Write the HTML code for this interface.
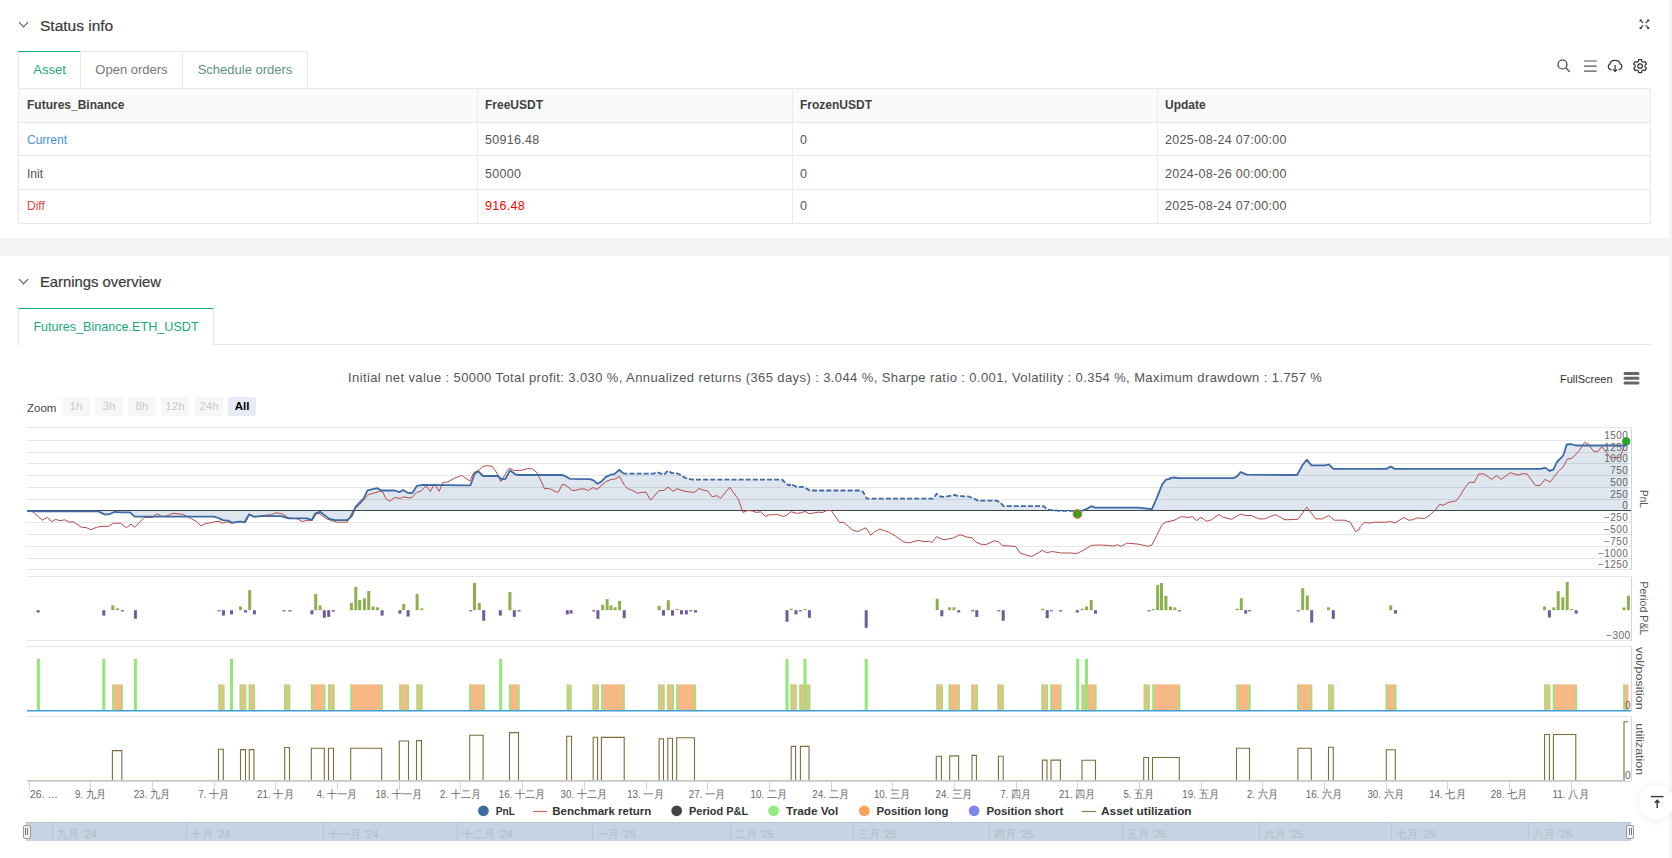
<!DOCTYPE html>
<html><head><meta charset="utf-8">
<style>
*{margin:0;padding:0;box-sizing:border-box}
html,body{width:1672px;height:858px;overflow:hidden;background:#f3f4f6;font-family:"Liberation Sans",sans-serif;color:#333}
.abs{position:absolute}
.panel{position:absolute;left:0;width:1669px;background:#fff}
.h{position:absolute;font-size:15.5px;color:#3a3a3a;white-space:nowrap;-webkit-text-stroke:0.2px #3a3a3a}
.chev{position:absolute;width:7px;height:7px;border-right:1.3px solid #555;border-bottom:1.3px solid #555;transform:rotate(45deg)}
.tab{position:absolute;top:51px;height:37px;border:1px solid #e8e8e8;border-bottom:none;font-size:13px;line-height:36px;text-align:center;white-space:nowrap;background:#fff}
.tbl{position:absolute;left:18px;top:88px;width:1633px;height:136px;border:1px solid #e8e8e8}
.row{position:absolute;left:0;width:1631px;border-top:1px solid #e8e8e8}
.cell{position:absolute;font-size:12.5px;white-space:nowrap;color:#555}
.vl{position:absolute;top:0;width:1px;height:134px;background:#ececec}
svg text{font-family:"Liberation Sans",sans-serif}
.ax{font-size:10px;fill:#666;letter-spacing:0.45px}
.xl{font-size:10.5px;fill:#666}
.lgt{font-size:11.5px;font-weight:bold;fill:#333}
.at{font-size:11.5px;fill:#555}
.zb{top:397px;width:28px;height:18.5px;background:#f7f7f7;border-radius:2px;font-size:11.5px;color:#c8c8c8;text-align:center;line-height:18.5px}
.lg{position:absolute;top:805px;font-size:11.5px;font-weight:bold;color:#333;white-space:nowrap;letter-spacing:0.2px}
.nl{position:absolute;top:827px;font-size:11px;color:#b3bcc7;white-space:nowrap}
</style></head><body>
<div class="panel" style="top:0;height:238px"></div>
<div class="chev" style="left:20px;top:19px"></div>
<div class="h" style="left:40px;top:17px">Status info</div>
<svg class="abs" style="left:1636px;top:16px" width="16" height="16" viewBox="0 0 16 16"><g stroke="#333" stroke-width="1.2" fill="none" stroke-linecap="round"><path d="M4.6 4.4 L6.8 6.6 M12.2 4.4 L10 6.6 M4.6 11.9 L6.8 9.7 M12.2 11.9 L10 9.7"/></g><g fill="#333"><path d="M3.6 3.4 L6.1 3.4 L3.6 5.9Z"/><path d="M13.2 3.4 L10.7 3.4 L13.2 5.9Z"/><path d="M3.6 12.9 L6.1 12.9 L3.6 10.4Z"/><path d="M13.2 12.9 L10.7 12.9 L13.2 10.4Z"/></g></svg>

<div class="tab" style="left:18px;width:63px;color:#1aa979;border-top:1.5px solid #1aad7f;line-height:36px">Asset</div>
<div class="tab" style="left:80px;width:103px;color:#777">Open orders</div>
<div class="tab" style="left:182px;width:126px;color:#5c9481">Schedule orders</div>

<svg class="abs" style="left:1550px;top:50px" width="110" height="35" viewBox="0 0 110 35">
 <g fill="none" stroke="#333" stroke-width="1.2">
  <circle cx="12.5" cy="14.5" r="4.5"/><path d="M15.8 17.8 L19.7 21.8"/>
  <path d="M34 11 H46.7 M34 16.1 H46.7 M34 21.2 H46.7" stroke="#555"/>
  <path d="M61.6 19.7 C58 19.7 57.3 15.2 59.9 14.2 C60.6 10.8 63.5 10.3 65.2 10.4 C68.4 10.5 69.8 12.4 70.2 14 C72.6 14.8 72.6 19.4 68.7 19.7"/>
  <path d="M65.1 15 V21.4 M63 19.3 L65.1 21.4 L67.2 19.3"/>
 </g>
 <g transform="translate(90.1,16.1)" fill="none" stroke="#333" stroke-width="1.2">
  <path d="M-1.76 -4.68 L-1.46 -6.54 L1.46 -6.54 L1.76 -4.68 L3.17 -3.87 L4.93 -4.54 L6.39 -2.00 L4.93 -0.81 L4.93 0.81 L6.39 2.00 L4.93 4.54 L3.17 3.87 L1.76 4.68 L1.46 6.54 L-1.46 6.54 L-1.76 4.68 L-3.17 3.87 L-4.93 4.54 L-6.39 2.00 L-4.93 0.81 L-4.93 -0.81 L-6.39 -2.00 L-4.93 -4.54 L-3.17 -3.87Z" stroke-linejoin="round"/>
  <circle r="2.3"/>
 </g>
</svg>

<div class="tbl">
 <div class="abs" style="left:0;top:0;width:1631px;height:33px;background:#fafafa"></div>
 <div class="row" style="top:33px"></div>
 <div class="row" style="top:66px"></div>
 <div class="row" style="top:100px"></div>
 <div class="vl" style="left:458px"></div>
 <div class="vl" style="left:773px"></div>
 <div class="vl" style="left:1138px"></div>
 <div class="cell" style="left:8px;top:9px;font-weight:bold;font-size:12px;color:#404040">Futures_Binance</div>
 <div class="cell" style="left:466px;top:9px;font-weight:bold;font-size:12px;color:#404040">FreeUSDT</div>
 <div class="cell" style="left:781px;top:9px;font-weight:bold;font-size:12px;color:#404040">FrozenUSDT</div>
 <div class="cell" style="left:1146px;top:9px;font-weight:bold;font-size:12px;color:#404040">Update</div>
 <div class="cell" style="left:8px;top:44px;color:#4a90e2;font-size:12px">Current</div>
 <div class="cell" style="left:466px;top:44px;letter-spacing:0.3px">50916.48</div>
 <div class="cell" style="left:781px;top:44px;letter-spacing:0.3px">0</div>
 <div class="cell" style="left:1146px;top:44px;letter-spacing:0.3px">2025-08-24 07:00:00</div>
 <div class="cell" style="left:8px;top:78px;font-size:12px">Init</div>
 <div class="cell" style="left:466px;top:78px;letter-spacing:0.3px">50000</div>
 <div class="cell" style="left:781px;top:78px;letter-spacing:0.3px">0</div>
 <div class="cell" style="left:1146px;top:78px;letter-spacing:0.3px">2024-08-26 00:00:00</div>
 <div class="cell" style="left:8px;top:110px;color:#d9463e;font-size:12px">Diff</div>
 <div class="cell" style="left:466px;top:110px;letter-spacing:0.3px;color:#ff0000">916.48</div>
 <div class="cell" style="left:781px;top:110px;letter-spacing:0.3px">0</div>
 <div class="cell" style="left:1146px;top:110px;letter-spacing:0.3px">2025-08-24 07:00:00</div>
</div>

<div class="panel" style="top:256px;height:602px"></div>
<div class="chev" style="left:20px;top:276px"></div>
<div class="h" style="left:40px;top:274px;font-size:14.8px">Earnings overview</div>
<div class="abs" style="left:18px;top:344px;width:1633px;height:1px;background:#e8e8e8"></div>
<div class="tab" style="left:18px;top:308px;width:196px;color:#1aa979;border-top:1.5px solid #1aad7f;line-height:36px;height:37px;font-size:12.6px">Futures_Binance.ETH_USDT</div>

<div class="abs" style="left:348px;top:370px;font-size:13px;letter-spacing:0.40px;color:#555;white-space:nowrap">Initial net value : 50000 Total profit: 3.030 %, Annualized returns (365 days) : 3.044 %, Sharpe ratio : 0.001, Volatility : 0.354 %, Maximum drawdown : 1.757 %</div>
<div class="abs" style="left:1560px;top:373px;font-size:11px;color:#333;white-space:nowrap">FullScreen</div>
<svg class="abs" style="left:1622px;top:370px" width="20" height="16"><g stroke="#666" stroke-width="3" stroke-linecap="round"><path d="M3 3.6 H16 M3 8.3 H16 M3 12.9 H16"/></g></svg>

<div class="abs" style="left:27px;top:401.5px;font-size:11.5px;color:#444">Zoom</div>
<div class="abs zb" style="left:62px">1h</div>
<div class="abs zb" style="left:95px">3h</div>
<div class="abs zb" style="left:128px">8h</div>
<div class="abs zb" style="left:161px">12h</div>
<div class="abs zb" style="left:195px">24h</div>
<div class="abs zb" style="left:228px;background:#e6ebf5;color:#000;font-weight:bold">All</div>

<svg class="abs" style="left:0;top:0" width="1672" height="858">
<line x1="27" x2="1631" y1="427.5" y2="427.5" stroke="#e6e6e6" stroke-width="1"/>
<line x1="27" x2="1631" y1="440.5" y2="440.5" stroke="#e6e6e6" stroke-width="1"/>
<line x1="27" x2="1631" y1="452.5" y2="452.5" stroke="#e6e6e6" stroke-width="1"/>
<line x1="27" x2="1631" y1="463.5" y2="463.5" stroke="#e6e6e6" stroke-width="1"/>
<line x1="27" x2="1631" y1="475.5" y2="475.5" stroke="#e6e6e6" stroke-width="1"/>
<line x1="27" x2="1631" y1="487.5" y2="487.5" stroke="#e6e6e6" stroke-width="1"/>
<line x1="27" x2="1631" y1="499.5" y2="499.5" stroke="#e6e6e6" stroke-width="1"/>
<line x1="27" x2="1631" y1="522.5" y2="522.5" stroke="#e6e6e6" stroke-width="1"/>
<line x1="27" x2="1631" y1="534.5" y2="534.5" stroke="#e6e6e6" stroke-width="1"/>
<line x1="27" x2="1631" y1="546.5" y2="546.5" stroke="#e6e6e6" stroke-width="1"/>
<line x1="27" x2="1631" y1="558.5" y2="558.5" stroke="#e6e6e6" stroke-width="1"/>
<line x1="27" x2="1631" y1="569.5" y2="569.5" stroke="#e6e6e6" stroke-width="1"/>
<path d="M27 510.9 L27.1 510.9 L36.8 511.4 L98.4 511.4 L104.9 514.6 L109.6 514.2 L114.2 512.0 L120.7 512.4 L130.1 512.4 L134.7 516.6 L214.0 516.6 L220.0 518.5 L219.9 518.9 L223.1 520.2 L227.7 520.7 L232.4 522.6 L239.9 521.7 L244.5 522.2 L249.2 514.2 L253.8 516.6 L262.2 516.1 L280.9 516.1 L288.4 518.3 L307.0 518.3 L311.7 520.2 L315.4 513.3 L320.1 511.8 L329.4 518.9 L335.0 520.2 L347.1 520.2 L351.8 516.1 L355.5 506.8 L363.9 498.0 L367.6 490.3 L377.0 488.1 L381.6 490.5 L394.7 490.5 L399.4 492.2 L403.1 490.0 L407.8 492.8 L410.0 493.1 L409.9 492.8 L412.7 492.8 L416.8 485.9 L422.4 484.9 L469.0 485.3 L470.5 485.3 L474.6 473.7 L478.4 471.3 L483.0 476.0 L497.9 476.0 L501.7 479.3 L505.4 478.8 L510.1 470.4 L515.7 474.5 L519.4 475.0 L561.4 475.0 L564.2 475.6 L569.8 478.8 L590.3 479.1 L594.0 480.6 L597.4 483.8 L600.0 482.5 L599.9 482.5 L601.2 481.6 L605.9 476.9 L610.5 474.7 L614.3 474.1 L619.5 469.8 L622.6 472.8 L622.6 472.8 L624.5 473.7 L653.4 473.7 L657.2 472.2 L663.7 474.7 L668.0 470.7 L672.1 473.2 L676.8 473.2 L681.4 475.4 L685.1 477.8 L692.6 479.7 L782.2 479.7 L785.0 482.5 L787.8 484.9 L790.0 485.3 L789.9 484.4 L791.2 484.4 L797.7 487.2 L803.3 486.8 L809.9 490.5 L860.2 490.5 L863.0 491.8 L866.8 498.7 L933.0 498.7 L936.7 493.7 L940.4 496.5 L944.2 496.9 L954.4 495.0 L959.1 496.1 L968.4 496.5 L974.0 498.4 L977.8 500.6 L980.0 500.6 L979.9 500.6 L996.1 500.6 L999.9 502.1 L1003.6 506.2 L1043.7 506.2 L1047.4 509.6 L1051.2 510.1 L1059.6 510.9 L1081.9 510.9 L1081.9 510.9 L1087.5 508.6 L1091.3 506.2 L1095.0 507.7 L1137.9 507.7 L1151.9 509.2 L1156.6 498.4 L1162.2 484.4 L1165.9 479.7 L1170.0 478.8 L1169.9 478.2 L1174.0 477.5 L1178.7 478.2 L1232.8 478.2 L1236.5 476.9 L1240.6 472.2 L1246.8 474.7 L1297.1 475.0 L1302.7 464.8 L1306.8 459.7 L1311.5 465.3 L1325.1 465.3 L1328.8 464.4 L1333.5 468.9 L1360.0 468.9 L1359.9 468.9 L1386.4 468.9 L1390.7 466.6 L1394.8 468.9 L1541.2 468.9 L1545.0 467.6 L1550.0 471.3 L1549.9 470.6 L1553.4 469.7 L1556.9 462.0 L1563.2 455.7 L1566.7 444.5 L1570.9 444.1 L1575.8 445.5 L1625.5 445.5 L1628.3 441.0 L1628.3 510.9 Z" fill="#3e6aa5" fill-opacity="0.17" stroke="none"/>
<line x1="27" x2="1631" y1="510.5" y2="510.5" stroke="#3c4450" stroke-width="1.2"/>
<path d="M27.1 510.9 L33.1 512.0 L38.7 517.0 L42.4 520.2 L47.1 517.4 L51.7 521.7 L55.4 519.4 L60.1 520.7 L64.8 519.8 L69.4 522.2 L73.2 521.7 L81.6 527.3 L86.2 527.6 L90.9 529.7 L96.5 527.3 L102.1 526.3 L108.6 526.3 L113.3 523.2 L120.7 523.2 L126.3 527.8 L131.0 524.1 L134.7 527.3 L144.1 517.6 L152.5 517.4 L157.1 513.8 L161.8 516.5 L166.5 516.1 L173.0 513.3 L181.4 514.2 L184.2 514.8 L188.8 517.4 L196.3 521.3 L201.0 526.0 L205.6 523.2 L210.3 523.0 L215.0 521.7 L220.0 521.3 L219.9 522.6 L223.1 523.0 L227.7 521.7 L231.5 523.2 L240.8 521.3 L245.4 522.6 L249.2 515.1 L254.8 517.0 L266.0 515.1 L271.6 514.6 L276.2 512.7 L281.8 513.8 L288.4 517.9 L297.7 518.9 L302.4 521.7 L307.0 520.2 L311.7 520.7 L316.3 514.2 L319.1 513.3 L326.6 518.9 L336.9 522.2 L347.1 522.2 L353.7 509.6 L359.3 504.9 L368.6 494.6 L379.8 491.3 L382.6 491.8 L386.3 499.3 L390.0 501.2 L394.7 497.4 L400.3 498.4 L404.0 496.9 L410.0 498.0 L409.9 498.0 L412.1 497.1 L416.8 492.4 L421.5 490.9 L426.1 485.7 L430.4 491.5 L434.5 483.8 L439.2 491.3 L442.9 482.5 L447.6 481.9 L454.1 478.4 L461.6 475.4 L470.0 481.2 L473.7 472.6 L478.4 470.4 L483.0 466.3 L487.7 465.7 L492.4 466.6 L497.0 473.2 L500.7 481.6 L505.4 474.1 L509.1 468.1 L513.8 470.4 L521.3 470.4 L527.8 468.5 L532.5 468.9 L537.1 472.8 L544.6 488.7 L549.3 488.5 L556.7 492.2 L558.6 491.8 L562.3 484.4 L566.0 485.3 L571.6 490.0 L575.4 490.5 L580.0 489.0 L584.7 489.0 L588.4 490.5 L593.1 487.5 L596.8 489.4 L600.0 487.2 L599.9 486.8 L605.9 481.6 L610.5 479.7 L615.2 479.0 L619.5 476.3 L624.5 485.3 L628.2 489.0 L632.9 490.5 L637.6 493.3 L641.3 492.4 L646.0 492.2 L650.6 500.2 L659.0 490.5 L663.7 490.5 L668.0 487.2 L673.0 491.3 L676.8 488.7 L683.3 490.9 L687.9 491.8 L694.5 492.4 L699.1 488.5 L703.8 490.3 L707.5 490.9 L712.2 496.9 L716.9 495.6 L720.6 498.4 L729.6 487.2 L738.3 499.3 L743.0 512.4 L747.6 510.5 L752.3 510.9 L756.0 512.4 L760.7 511.8 L765.4 516.5 L769.1 514.8 L778.4 514.6 L783.1 516.5 L786.8 515.1 L790.0 512.4 L789.9 512.4 L791.2 511.8 L796.8 513.3 L800.5 512.9 L805.2 511.4 L808.9 513.7 L818.2 512.2 L822.9 512.4 L826.6 510.5 L831.3 510.5 L839.7 522.6 L843.4 522.2 L852.8 530.1 L857.4 531.6 L865.8 527.8 L870.9 535.1 L875.1 531.4 L879.8 529.1 L888.2 531.9 L895.7 536.2 L904.1 542.2 L909.7 542.8 L918.1 540.3 L923.7 541.6 L929.3 541.3 L932.1 542.6 L936.7 536.6 L942.3 539.4 L946.0 539.4 L953.5 537.9 L960.0 534.7 L966.6 537.0 L972.2 537.9 L975.9 542.2 L980.0 543.5 L979.9 544.1 L985.9 544.6 L994.3 540.9 L998.0 541.6 L1002.6 545.6 L1015.7 546.5 L1020.4 553.4 L1031.6 556.6 L1042.8 550.2 L1046.5 552.8 L1052.1 551.5 L1061.4 553.0 L1068.9 553.0 L1077.3 553.4 L1083.8 550.0 L1091.3 545.4 L1098.7 545.0 L1108.1 545.4 L1113.7 546.3 L1117.4 544.6 L1121.1 546.5 L1126.7 543.1 L1137.9 544.1 L1148.2 546.3 L1151.9 545.0 L1156.6 535.7 L1162.2 524.5 L1165.9 522.1 L1170.0 521.3 L1169.9 521.1 L1174.0 520.4 L1181.5 516.6 L1188.0 517.4 L1192.6 516.6 L1196.4 520.7 L1201.0 517.4 L1206.6 521.3 L1211.3 519.8 L1218.8 514.6 L1223.4 517.4 L1231.8 519.3 L1240.2 514.2 L1245.8 515.5 L1251.4 515.5 L1258.9 518.9 L1264.5 518.9 L1270.1 516.6 L1275.7 514.6 L1285.0 519.8 L1298.1 519.3 L1306.8 507.1 L1315.8 518.9 L1322.3 518.9 L1328.8 515.5 L1334.4 520.2 L1344.7 520.2 L1350.3 522.2 L1355.5 531.6 L1360.0 528.8 L1359.9 526.9 L1364.6 522.2 L1368.7 523.2 L1374.3 522.2 L1386.4 522.2 L1390.1 521.3 L1394.8 523.0 L1404.1 517.4 L1408.8 520.2 L1412.5 519.8 L1417.2 517.9 L1424.6 518.5 L1430.2 514.8 L1434.9 510.5 L1439.6 504.3 L1443.3 505.3 L1447.9 502.5 L1456.3 500.8 L1460.1 495.6 L1464.7 488.1 L1469.4 482.1 L1474.1 482.5 L1478.7 474.1 L1483.4 473.7 L1491.8 479.3 L1496.5 475.6 L1501.1 479.3 L1510.4 472.8 L1517.9 475.0 L1523.5 473.5 L1527.2 474.1 L1535.6 485.7 L1540.3 485.3 L1545.0 479.3 L1550.0 482.1 L1553.4 477.8 L1558.3 471.3 L1563.2 466.9 L1567.4 458.9 L1571.6 458.5 L1578.6 451.5 L1584.6 442.4 L1588.4 444.1 L1593.3 451.0 L1597.5 451.9 L1601.7 446.6 L1610.8 457.8 L1619.9 457.5 L1624.1 446.6 L1628.3 439.6" fill="none" stroke="#b54a48" stroke-width="1" stroke-linejoin="round"/>
<path d="M27.1 510.9 L36.8 511.4 L98.4 511.4 L104.9 514.6 L109.6 514.2 L114.2 512.0 L120.7 512.4 L130.1 512.4 L134.7 516.6 L214.0 516.6 L220.0 518.5 L219.9 518.9 L223.1 520.2 L227.7 520.7 L232.4 522.6 L239.9 521.7 L244.5 522.2 L249.2 514.2 L253.8 516.6 L262.2 516.1 L280.9 516.1 L288.4 518.3 L307.0 518.3 L311.7 520.2 L315.4 513.3 L320.1 511.8 L329.4 518.9 L335.0 520.2 L347.1 520.2 L351.8 516.1 L355.5 506.8 L363.9 498.0 L367.6 490.3 L377.0 488.1 L381.6 490.5 L394.7 490.5 L399.4 492.2 L403.1 490.0 L407.8 492.8 L410.0 493.1 L409.9 492.8 L412.7 492.8 L416.8 485.9 L422.4 484.9 L469.0 485.3 L470.5 485.3 L474.6 473.7 L478.4 471.3 L483.0 476.0 L497.9 476.0 L501.7 479.3 L505.4 478.8 L510.1 470.4 L515.7 474.5 L519.4 475.0 L561.4 475.0 L564.2 475.6 L569.8 478.8 L590.3 479.1 L594.0 480.6 L597.4 483.8 L600.0 482.5 L599.9 482.5 L601.2 481.6 L605.9 476.9 L610.5 474.7 L614.3 474.1 L619.5 469.8 L622.6 472.8" fill="none" stroke="#3e6aa5" stroke-width="1.8" stroke-linejoin="round"/>
<path d="M622.6 472.8 L624.5 473.7 L653.4 473.7 L657.2 472.2 L663.7 474.7 L668.0 470.7 L672.1 473.2 L676.8 473.2 L681.4 475.4 L685.1 477.8 L692.6 479.7 L782.2 479.7 L785.0 482.5 L787.8 484.9 L790.0 485.3 L789.9 484.4 L791.2 484.4 L797.7 487.2 L803.3 486.8 L809.9 490.5 L860.2 490.5 L863.0 491.8 L866.8 498.7 L933.0 498.7 L936.7 493.7 L940.4 496.5 L944.2 496.9 L954.4 495.0 L959.1 496.1 L968.4 496.5 L974.0 498.4 L977.8 500.6 L980.0 500.6 L979.9 500.6 L996.1 500.6 L999.9 502.1 L1003.6 506.2 L1043.7 506.2 L1047.4 509.6 L1051.2 510.1 L1059.6 510.9 L1081.9 510.9" fill="none" stroke="#3e6aa5" stroke-width="1.8" stroke-dasharray="5,2.1" stroke-linejoin="round"/>
<path d="M1081.9 510.9 L1087.5 508.6 L1091.3 506.2 L1095.0 507.7 L1137.9 507.7 L1151.9 509.2 L1156.6 498.4 L1162.2 484.4 L1165.9 479.7 L1170.0 478.8 L1169.9 478.2 L1174.0 477.5 L1178.7 478.2 L1232.8 478.2 L1236.5 476.9 L1240.6 472.2 L1246.8 474.7 L1297.1 475.0 L1302.7 464.8 L1306.8 459.7 L1311.5 465.3 L1325.1 465.3 L1328.8 464.4 L1333.5 468.9 L1360.0 468.9 L1359.9 468.9 L1386.4 468.9 L1390.7 466.6 L1394.8 468.9 L1541.2 468.9 L1545.0 467.6 L1550.0 471.3 L1549.9 470.6 L1553.4 469.7 L1556.9 462.0 L1563.2 455.7 L1566.7 444.5 L1570.9 444.1 L1575.8 445.5 L1625.5 445.5 L1628.3 441.0" fill="none" stroke="#3e6aa5" stroke-width="1.8" stroke-linejoin="round"/>
<circle cx="1077.5" cy="514" r="4.4" fill="#0fb30f" stroke="#ff5a5a" stroke-width="1"/>
<path d="M1077.7 511.5 V518.5" stroke="#e0604a" stroke-width="1"/><circle cx="1078.2" cy="512.3" r="0.9" fill="#ff5050"/>
<circle cx="1626.2" cy="441.3" r="3.8" fill="#19b319" stroke="#2a9a2a" stroke-width="0.8"/>
<line x1="1631.5" x2="1631.5" y1="428" y2="570" stroke="#ccd6eb" stroke-width="1"/>
<line x1="1631.5" x2="1631.5" y1="576.5" y2="641" stroke="#ccd6eb" stroke-width="1"/>
<line x1="1631.5" x2="1631.5" y1="646.5" y2="711" stroke="#ccd6eb" stroke-width="1"/>
<line x1="1631.5" x2="1631.5" y1="716.5" y2="780.5" stroke="#ccd6eb" stroke-width="1"/>
<text x="1628.3" y="439.0" text-anchor="end" class="ax">1500</text>
<text x="1628.3" y="451.0" text-anchor="end" class="ax">1250</text>
<text x="1628.3" y="462.0" text-anchor="end" class="ax">1000</text>
<text x="1628.3" y="474.0" text-anchor="end" class="ax">750</text>
<text x="1628.3" y="486.0" text-anchor="end" class="ax">500</text>
<text x="1628.3" y="498.0" text-anchor="end" class="ax">250</text>
<text x="1628.3" y="509.0" text-anchor="end" class="ax">0</text>
<text x="1628.3" y="521.0" text-anchor="end" class="ax">−250</text>
<text x="1628.3" y="533.0" text-anchor="end" class="ax">−500</text>
<text x="1628.3" y="545.0" text-anchor="end" class="ax">−750</text>
<text x="1628.3" y="557.0" text-anchor="end" class="ax">−1000</text>
<text x="1628.3" y="568.0" text-anchor="end" class="ax">−1250</text>
<line x1="27" x2="1631" y1="576.5" y2="576.5" stroke="#e6e6e6" stroke-width="1"/>
<line x1="27" x2="1631" y1="640.5" y2="640.5" stroke="#e6e6e6" stroke-width="1"/>
<rect x="36.7" y="610.2" width="3" height="2.3" fill="#6f5a9a"/>
<rect x="102.3" y="610.2" width="3" height="5.4" fill="#6f5a9a"/>
<rect x="111.3" y="605.4" width="3" height="4.8" fill="#8db04f"/>
<rect x="116.1" y="608.3" width="3" height="1.9" fill="#8db04f"/>
<rect x="120.9" y="610.2" width="3" height="1.2" fill="#6f5a9a"/>
<rect x="133.9" y="610.2" width="3" height="8.6" fill="#6f5a9a"/>
<rect x="217.5" y="610.2" width="3" height="1.2" fill="#6f5a9a"/>
<rect x="221.9" y="610.2" width="3" height="5.4" fill="#6f5a9a"/>
<rect x="230.0" y="610.2" width="3" height="4.2" fill="#6f5a9a"/>
<rect x="239.0" y="606.4" width="3" height="3.8" fill="#8db04f"/>
<rect x="244.0" y="610.2" width="3" height="2.3" fill="#6f5a9a"/>
<rect x="248.2" y="590.1" width="3" height="20.1" fill="#8db04f"/>
<rect x="252.9" y="610.2" width="3" height="4.2" fill="#6f5a9a"/>
<rect x="282.6" y="610.2" width="3" height="1.2" fill="#6f5a9a"/>
<rect x="288.4" y="610.2" width="3" height="1.3" fill="#6f5a9a"/>
<rect x="310.4" y="610.2" width="3" height="4.2" fill="#6f5a9a"/>
<rect x="314.2" y="593.9" width="3" height="16.3" fill="#8db04f"/>
<rect x="318.6" y="605.4" width="3" height="4.8" fill="#8db04f"/>
<rect x="322.8" y="610.2" width="3" height="7.6" fill="#6f5a9a"/>
<rect x="327.2" y="610.2" width="3" height="6.7" fill="#6f5a9a"/>
<rect x="331.8" y="610.2" width="3" height="1.5" fill="#6f5a9a"/>
<rect x="349.9" y="602.9" width="3" height="7.3" fill="#8db04f"/>
<rect x="354.3" y="586.8" width="3" height="23.4" fill="#8db04f"/>
<rect x="358.2" y="600.0" width="3" height="10.2" fill="#8db04f"/>
<rect x="362.9" y="598.3" width="3" height="11.9" fill="#8db04f"/>
<rect x="367.2" y="591.1" width="3" height="19.1" fill="#8db04f"/>
<rect x="371.6" y="606.4" width="3" height="3.8" fill="#8db04f"/>
<rect x="376.0" y="607.3" width="3" height="2.9" fill="#8db04f"/>
<rect x="380.6" y="610.2" width="3" height="5.4" fill="#6f5a9a"/>
<rect x="398.4" y="610.2" width="3" height="3.4" fill="#6f5a9a"/>
<rect x="402.2" y="603.9" width="3" height="6.3" fill="#8db04f"/>
<rect x="406.6" y="610.2" width="3" height="6.3" fill="#6f5a9a"/>
<rect x="415.6" y="593.9" width="3" height="16.3" fill="#8db04f"/>
<rect x="420.4" y="608.3" width="3" height="1.9" fill="#8db04f"/>
<rect x="469.2" y="610.2" width="3" height="1.2" fill="#6f5a9a"/>
<rect x="473.0" y="583.0" width="3" height="27.2" fill="#8db04f"/>
<rect x="477.8" y="602.9" width="3" height="7.3" fill="#8db04f"/>
<rect x="482.2" y="610.2" width="3" height="10.5" fill="#6f5a9a"/>
<rect x="498.8" y="610.2" width="3" height="5.4" fill="#6f5a9a"/>
<rect x="508.4" y="592.0" width="3" height="18.2" fill="#8db04f"/>
<rect x="512.8" y="610.2" width="3" height="6.7" fill="#6f5a9a"/>
<rect x="517.6" y="610.2" width="3" height="1.3" fill="#6f5a9a"/>
<rect x="565.8" y="610.2" width="3" height="4.2" fill="#6f5a9a"/>
<rect x="569.6" y="610.2" width="3" height="3.4" fill="#6f5a9a"/>
<rect x="592.2" y="610.2" width="3" height="1.2" fill="#6f5a9a"/>
<rect x="596.4" y="610.2" width="3" height="8.6" fill="#6f5a9a"/>
<rect x="601.2" y="604.8" width="3" height="5.4" fill="#8db04f"/>
<rect x="605.6" y="599.1" width="3" height="11.1" fill="#8db04f"/>
<rect x="609.5" y="605.4" width="3" height="4.8" fill="#8db04f"/>
<rect x="613.7" y="607.3" width="3" height="2.9" fill="#8db04f"/>
<rect x="618.1" y="601.0" width="3" height="9.2" fill="#8db04f"/>
<rect x="622.7" y="610.2" width="3" height="8.0" fill="#6f5a9a"/>
<rect x="657.6" y="605.8" width="3" height="4.4" fill="#8db04f"/>
<rect x="662.0" y="610.2" width="3" height="5.4" fill="#6f5a9a"/>
<rect x="666.8" y="600.2" width="3" height="10.0" fill="#8db04f"/>
<rect x="671.0" y="610.2" width="3" height="5.4" fill="#6f5a9a"/>
<rect x="675.8" y="609.0" width="3" height="1.2" fill="#8db04f"/>
<rect x="680.0" y="610.2" width="3" height="4.2" fill="#6f5a9a"/>
<rect x="684.8" y="610.2" width="3" height="4.2" fill="#6f5a9a"/>
<rect x="689.2" y="610.2" width="3" height="1.2" fill="#6f5a9a"/>
<rect x="694.0" y="610.2" width="3" height="2.3" fill="#6f5a9a"/>
<rect x="785.5" y="610.2" width="3" height="11.5" fill="#6f5a9a"/>
<rect x="789.7" y="608.7" width="3" height="1.5" fill="#8db04f"/>
<rect x="794.5" y="610.2" width="3" height="4.2" fill="#6f5a9a"/>
<rect x="798.9" y="610.2" width="3" height="1.2" fill="#6f5a9a"/>
<rect x="803.5" y="608.9" width="3" height="1.3" fill="#8db04f"/>
<rect x="807.9" y="610.2" width="3" height="7.6" fill="#6f5a9a"/>
<rect x="864.7" y="610.2" width="3" height="17.6" fill="#6f5a9a"/>
<rect x="935.7" y="598.7" width="3" height="11.5" fill="#8db04f"/>
<rect x="940.3" y="610.2" width="3" height="6.1" fill="#6f5a9a"/>
<rect x="948.0" y="607.3" width="3" height="2.9" fill="#8db04f"/>
<rect x="952.4" y="607.3" width="3" height="2.9" fill="#8db04f"/>
<rect x="957.2" y="610.2" width="3" height="2.3" fill="#6f5a9a"/>
<rect x="971.1" y="610.2" width="3" height="1.2" fill="#6f5a9a"/>
<rect x="975.3" y="610.2" width="3" height="6.7" fill="#6f5a9a"/>
<rect x="997.3" y="610.2" width="3" height="1.2" fill="#6f5a9a"/>
<rect x="1001.7" y="610.2" width="3" height="10.5" fill="#6f5a9a"/>
<rect x="1041.3" y="608.7" width="3" height="1.5" fill="#8db04f"/>
<rect x="1045.7" y="610.2" width="3" height="8.0" fill="#6f5a9a"/>
<rect x="1049.9" y="610.2" width="3" height="1.2" fill="#6f5a9a"/>
<rect x="1059.1" y="610.2" width="3" height="1.2" fill="#6f5a9a"/>
<rect x="1075.8" y="610.2" width="3" height="2.3" fill="#6f5a9a"/>
<rect x="1080.6" y="608.7" width="3" height="1.5" fill="#8db04f"/>
<rect x="1085.0" y="606.4" width="3" height="3.8" fill="#8db04f"/>
<rect x="1089.7" y="600.0" width="3" height="10.2" fill="#8db04f"/>
<rect x="1094.0" y="610.2" width="3" height="3.4" fill="#6f5a9a"/>
<rect x="1147.5" y="610.2" width="3" height="1.2" fill="#6f5a9a"/>
<rect x="1151.8" y="609.0" width="3" height="1.2" fill="#8db04f"/>
<rect x="1156.2" y="584.9" width="3" height="25.3" fill="#8db04f"/>
<rect x="1160.0" y="583.0" width="3" height="27.2" fill="#8db04f"/>
<rect x="1164.4" y="595.8" width="3" height="14.4" fill="#8db04f"/>
<rect x="1169.0" y="606.4" width="3" height="3.8" fill="#8db04f"/>
<rect x="1173.4" y="607.3" width="3" height="2.9" fill="#8db04f"/>
<rect x="1177.8" y="610.2" width="3" height="1.2" fill="#6f5a9a"/>
<rect x="1235.6" y="608.7" width="3" height="1.5" fill="#8db04f"/>
<rect x="1239.8" y="598.3" width="3" height="11.9" fill="#8db04f"/>
<rect x="1244.2" y="610.2" width="3" height="3.4" fill="#6f5a9a"/>
<rect x="1248.0" y="610.2" width="3" height="1.2" fill="#6f5a9a"/>
<rect x="1296.8" y="610.2" width="3" height="1.2" fill="#6f5a9a"/>
<rect x="1301.2" y="588.2" width="3" height="22.0" fill="#8db04f"/>
<rect x="1305.8" y="595.5" width="3" height="14.7" fill="#8db04f"/>
<rect x="1310.2" y="610.2" width="3" height="12.4" fill="#6f5a9a"/>
<rect x="1327.0" y="607.3" width="3" height="2.9" fill="#8db04f"/>
<rect x="1331.8" y="610.2" width="3" height="8.6" fill="#6f5a9a"/>
<rect x="1389.2" y="605.4" width="3" height="4.8" fill="#8db04f"/>
<rect x="1394.0" y="610.2" width="3" height="3.4" fill="#6f5a9a"/>
<rect x="1543.1" y="606.4" width="3" height="3.8" fill="#8db04f"/>
<rect x="1547.9" y="610.2" width="3" height="7.3" fill="#6f5a9a"/>
<rect x="1552.3" y="607.3" width="3" height="2.9" fill="#8db04f"/>
<rect x="1556.7" y="591.1" width="3" height="19.1" fill="#8db04f"/>
<rect x="1561.3" y="597.4" width="3" height="12.8" fill="#8db04f"/>
<rect x="1565.7" y="582.1" width="3" height="28.1" fill="#8db04f"/>
<rect x="1570.1" y="609.0" width="3" height="1.2" fill="#8db04f"/>
<rect x="1574.7" y="610.2" width="3" height="3.4" fill="#6f5a9a"/>
<rect x="1622.5" y="607.5" width="3" height="2.7" fill="#8db04f"/>
<rect x="1626.9" y="595.7" width="3" height="14.5" fill="#8db04f"/>
<text x="1630.5" y="638.5" text-anchor="end" class="ax">−300</text>
<line x1="27" x2="1631" y1="646.5" y2="646.5" stroke="#e6e6e6" stroke-width="1"/>
<line x1="27" x2="1631" y1="716.5" y2="716.5" stroke="#e6e6e6" stroke-width="1"/>
<rect x="112.4" y="684.4" width="10.4" height="26.1" fill="#f6b986"/>
<rect x="112.4" y="684.4" width="1.5" height="26.1" fill="#8ee87a"/>
<rect x="121.3" y="685.1999999999999" width="1.5" height="25.3" fill="#8ee87a"/>
<rect x="218.5" y="684.4" width="5.9" height="26.1" fill="#f6b986"/>
<rect x="218.5" y="684.4" width="1.5" height="26.1" fill="#8ee87a"/>
<rect x="222.9" y="685.1999999999999" width="1.5" height="25.3" fill="#8ee87a"/>
<rect x="239.7" y="684.4" width="6.5" height="26.1" fill="#f6b986"/>
<rect x="239.7" y="684.4" width="1.5" height="26.1" fill="#8ee87a"/>
<rect x="244.7" y="685.1999999999999" width="1.5" height="25.3" fill="#8ee87a"/>
<rect x="248.7" y="684.4" width="6.3" height="26.1" fill="#f6b986"/>
<rect x="248.7" y="684.4" width="1.5" height="26.1" fill="#8ee87a"/>
<rect x="253.5" y="685.1999999999999" width="1.5" height="25.3" fill="#8ee87a"/>
<rect x="284.1" y="684.4" width="6.1" height="26.1" fill="#f6b986"/>
<rect x="284.1" y="684.4" width="1.5" height="26.1" fill="#8ee87a"/>
<rect x="288.7" y="685.1999999999999" width="1.5" height="25.3" fill="#8ee87a"/>
<rect x="310.9" y="684.4" width="14.4" height="26.1" fill="#f6b986"/>
<rect x="310.9" y="684.4" width="1.5" height="26.1" fill="#8ee87a"/>
<rect x="323.8" y="685.1999999999999" width="1.5" height="25.3" fill="#8ee87a"/>
<rect x="328.1" y="684.4" width="6.4" height="26.1" fill="#f6b986"/>
<rect x="328.1" y="684.4" width="1.5" height="26.1" fill="#8ee87a"/>
<rect x="333.0" y="685.1999999999999" width="1.5" height="25.3" fill="#8ee87a"/>
<rect x="350.5" y="684.4" width="32.1" height="26.1" fill="#f6b986"/>
<rect x="350.5" y="684.4" width="1.5" height="26.1" fill="#8ee87a"/>
<rect x="381.1" y="685.1999999999999" width="1.5" height="25.3" fill="#8ee87a"/>
<rect x="399.3" y="684.4" width="9.6" height="26.1" fill="#f6b986"/>
<rect x="399.3" y="684.4" width="1.5" height="26.1" fill="#8ee87a"/>
<rect x="407.4" y="685.1999999999999" width="1.5" height="25.3" fill="#8ee87a"/>
<rect x="416.5" y="684.4" width="5.9" height="26.1" fill="#f6b986"/>
<rect x="416.5" y="684.4" width="1.5" height="26.1" fill="#8ee87a"/>
<rect x="420.9" y="685.1999999999999" width="1.5" height="25.3" fill="#8ee87a"/>
<rect x="469.3" y="684.4" width="15.3" height="26.1" fill="#f6b986"/>
<rect x="469.3" y="684.4" width="1.5" height="26.1" fill="#8ee87a"/>
<rect x="483.1" y="685.1999999999999" width="1.5" height="25.3" fill="#8ee87a"/>
<rect x="508.9" y="684.4" width="10.6" height="26.1" fill="#f6b986"/>
<rect x="508.9" y="684.4" width="1.5" height="26.1" fill="#8ee87a"/>
<rect x="518.0" y="685.1999999999999" width="1.5" height="25.3" fill="#8ee87a"/>
<rect x="566.7" y="684.4" width="4.8" height="26.1" fill="#f6b986"/>
<rect x="566.7" y="684.4" width="1.5" height="26.1" fill="#8ee87a"/>
<rect x="570.0" y="685.1999999999999" width="1.5" height="25.3" fill="#8ee87a"/>
<rect x="592.6" y="684.4" width="6.3" height="26.1" fill="#f6b986"/>
<rect x="592.6" y="684.4" width="1.5" height="26.1" fill="#8ee87a"/>
<rect x="597.4" y="685.1999999999999" width="1.5" height="25.3" fill="#8ee87a"/>
<rect x="601.4" y="684.4" width="23.3" height="26.1" fill="#f6b986"/>
<rect x="601.4" y="684.4" width="1.5" height="26.1" fill="#8ee87a"/>
<rect x="623.2" y="685.1999999999999" width="1.5" height="25.3" fill="#8ee87a"/>
<rect x="658.2" y="684.4" width="6.3" height="26.1" fill="#f6b986"/>
<rect x="658.2" y="684.4" width="1.5" height="26.1" fill="#8ee87a"/>
<rect x="663.0" y="685.1999999999999" width="1.5" height="25.3" fill="#8ee87a"/>
<rect x="667.2" y="684.4" width="6.7" height="26.1" fill="#f6b986"/>
<rect x="667.2" y="684.4" width="1.5" height="26.1" fill="#8ee87a"/>
<rect x="672.4" y="685.1999999999999" width="1.5" height="25.3" fill="#8ee87a"/>
<rect x="676.4" y="684.4" width="19.7" height="26.1" fill="#f6b986"/>
<rect x="676.4" y="684.4" width="1.5" height="26.1" fill="#8ee87a"/>
<rect x="694.6" y="685.1999999999999" width="1.5" height="25.3" fill="#8ee87a"/>
<rect x="790.6" y="684.4" width="6.0" height="26.1" fill="#f6b986"/>
<rect x="790.6" y="684.4" width="1.5" height="26.1" fill="#8ee87a"/>
<rect x="795.1" y="685.1999999999999" width="1.5" height="25.3" fill="#8ee87a"/>
<rect x="799.4" y="684.4" width="10.9" height="26.1" fill="#f6b986"/>
<rect x="799.4" y="684.4" width="1.5" height="26.1" fill="#8ee87a"/>
<rect x="808.8" y="685.1999999999999" width="1.5" height="25.3" fill="#8ee87a"/>
<rect x="936.3" y="684.4" width="6.5" height="26.1" fill="#f6b986"/>
<rect x="936.3" y="684.4" width="1.5" height="26.1" fill="#8ee87a"/>
<rect x="941.3" y="685.1999999999999" width="1.5" height="25.3" fill="#8ee87a"/>
<rect x="948.7" y="684.4" width="10.9" height="26.1" fill="#f6b986"/>
<rect x="948.7" y="684.4" width="1.5" height="26.1" fill="#8ee87a"/>
<rect x="958.1" y="685.1999999999999" width="1.5" height="25.3" fill="#8ee87a"/>
<rect x="971.4" y="684.4" width="6.4" height="26.1" fill="#f6b986"/>
<rect x="971.4" y="684.4" width="1.5" height="26.1" fill="#8ee87a"/>
<rect x="976.3" y="685.1999999999999" width="1.5" height="25.3" fill="#8ee87a"/>
<rect x="997.5" y="684.4" width="6.1" height="26.1" fill="#f6b986"/>
<rect x="997.5" y="684.4" width="1.5" height="26.1" fill="#8ee87a"/>
<rect x="1002.1" y="685.1999999999999" width="1.5" height="25.3" fill="#8ee87a"/>
<rect x="1041.5" y="684.4" width="6.5" height="26.1" fill="#f6b986"/>
<rect x="1041.5" y="684.4" width="1.5" height="26.1" fill="#8ee87a"/>
<rect x="1046.5" y="685.1999999999999" width="1.5" height="25.3" fill="#8ee87a"/>
<rect x="1050.5" y="684.4" width="10.9" height="26.1" fill="#f6b986"/>
<rect x="1050.5" y="684.4" width="1.5" height="26.1" fill="#8ee87a"/>
<rect x="1059.9" y="685.1999999999999" width="1.5" height="25.3" fill="#8ee87a"/>
<rect x="1081.5" y="684.4" width="14.9" height="26.1" fill="#f6b986"/>
<rect x="1081.5" y="684.4" width="1.5" height="26.1" fill="#8ee87a"/>
<rect x="1094.9" y="685.1999999999999" width="1.5" height="25.3" fill="#8ee87a"/>
<rect x="1143.7" y="684.4" width="5.9" height="26.1" fill="#f6b986"/>
<rect x="1143.7" y="684.4" width="1.5" height="26.1" fill="#8ee87a"/>
<rect x="1148.1" y="685.1999999999999" width="1.5" height="25.3" fill="#8ee87a"/>
<rect x="1152.5" y="684.4" width="27.7" height="26.1" fill="#f6b986"/>
<rect x="1152.5" y="684.4" width="1.5" height="26.1" fill="#8ee87a"/>
<rect x="1178.7" y="685.1999999999999" width="1.5" height="25.3" fill="#8ee87a"/>
<rect x="1236.5" y="684.4" width="14.0" height="26.1" fill="#f6b986"/>
<rect x="1236.5" y="684.4" width="1.5" height="26.1" fill="#8ee87a"/>
<rect x="1249.0" y="685.1999999999999" width="1.5" height="25.3" fill="#8ee87a"/>
<rect x="1297.3" y="684.4" width="14.9" height="26.1" fill="#f6b986"/>
<rect x="1297.3" y="684.4" width="1.5" height="26.1" fill="#8ee87a"/>
<rect x="1310.7" y="685.1999999999999" width="1.5" height="25.3" fill="#8ee87a"/>
<rect x="1328.0" y="684.4" width="6.1" height="26.1" fill="#f6b986"/>
<rect x="1328.0" y="684.4" width="1.5" height="26.1" fill="#8ee87a"/>
<rect x="1332.6" y="685.1999999999999" width="1.5" height="25.3" fill="#8ee87a"/>
<rect x="1385.7" y="684.4" width="10.6" height="26.1" fill="#f6b986"/>
<rect x="1385.7" y="684.4" width="1.5" height="26.1" fill="#8ee87a"/>
<rect x="1394.8" y="685.1999999999999" width="1.5" height="25.3" fill="#8ee87a"/>
<rect x="1544.2" y="684.4" width="6.1" height="26.1" fill="#f6b986"/>
<rect x="1544.2" y="684.4" width="1.5" height="26.1" fill="#8ee87a"/>
<rect x="1548.8" y="685.1999999999999" width="1.5" height="25.3" fill="#8ee87a"/>
<rect x="1552.8" y="684.4" width="24.3" height="26.1" fill="#f6b986"/>
<rect x="1552.8" y="684.4" width="1.5" height="26.1" fill="#8ee87a"/>
<rect x="1575.6" y="685.1999999999999" width="1.5" height="25.3" fill="#8ee87a"/>
<rect x="1623.3" y="684.4" width="5.2" height="26.1" fill="#f6b986"/>
<rect x="1623.3" y="684.4" width="1.5" height="26.1" fill="#8ee87a"/>
<rect x="36.9" y="658.8" width="3" height="51.7" fill="#8ee87a"/>
<rect x="102.3" y="658.8" width="3" height="51.7" fill="#8ee87a"/>
<rect x="133.9" y="658.8" width="3" height="51.7" fill="#8ee87a"/>
<rect x="230.0" y="658.8" width="3" height="51.7" fill="#8ee87a"/>
<rect x="499.2" y="658.8" width="3" height="51.7" fill="#8ee87a"/>
<rect x="785.5" y="658.8" width="3" height="51.7" fill="#8ee87a"/>
<rect x="803.5" y="658.8" width="3" height="51.7" fill="#8ee87a"/>
<rect x="864.7" y="658.8" width="3" height="51.7" fill="#8ee87a"/>
<rect x="1076.2" y="658.8" width="3" height="51.7" fill="#8ee87a"/>
<rect x="1085.0" y="658.8" width="3" height="51.7" fill="#8ee87a"/>
<line x1="27" x2="1631" y1="710.8" y2="710.8" stroke="#3d9fd9" stroke-width="1.6"/>
<text x="1631" y="709" text-anchor="end" class="ax">0</text>
<line x1="27" x2="1631" y1="781.5" y2="781.5" stroke="#ccd6eb" stroke-width="1"/>
<path d="M27 780.5 L112.4 780.5 L112.4 750.6 L121.8 750.6 L121.8 780.5 L218.5 780.5 L218.5 749.2 L223.3 749.2 L223.3 780.5 L240.5 780.5 L240.5 749.6 L245.5 749.6 L245.5 780.5 L249.3 780.5 L249.3 749.6 L253.9 749.6 L253.9 780.5 L284.7 780.5 L284.7 747.5 L289.5 747.5 L289.5 780.5 L311.3 780.5 L311.3 748.3 L324.3 748.3 L324.3 780.5 L328.5 780.5 L328.5 748.3 L333.5 748.3 L333.5 780.5 L350.7 780.5 L350.7 748.3 L381.7 748.3 L381.7 780.5 L399.3 780.5 L399.3 741.0 L408.5 741.0 L408.5 780.5 L416.5 780.5 L416.5 740.6 L421.5 740.6 L421.5 780.5 L469.7 780.5 L469.7 735.3 L483.1 735.3 L483.1 780.5 L509.5 780.5 L509.5 732.6 L518.5 732.6 L518.5 780.5 L566.7 780.5 L566.7 736.2 L571.5 736.2 L571.5 780.5 L593.2 780.5 L593.2 737.2 L597.6 737.2 L597.6 780.5 L601.4 780.5 L601.4 737.4 L624.2 737.4 L624.2 780.5 L659.1 780.5 L659.1 738.7 L663.5 738.7 L663.5 780.5 L667.8 780.5 L667.8 738.3 L672.5 738.3 L672.5 780.5 L676.7 780.5 L676.7 737.8 L694.5 737.8 L694.5 780.5 L791.2 780.5 L791.2 746.4 L795.6 746.4 L795.6 780.5 L800.4 780.5 L800.4 746.4 L809.0 746.4 L809.0 780.5 L936.3 780.5 L936.3 756.3 L941.4 756.3 L941.4 780.5 L949.7 780.5 L949.7 755.9 L958.6 755.9 L958.6 780.5 L972.0 780.5 L972.0 755.4 L976.4 755.4 L976.4 780.5 L998.4 780.5 L998.4 756.3 L1003.2 756.3 L1003.2 780.5 L1042.4 780.5 L1042.4 760.1 L1047.0 760.1 L1047.0 780.5 L1051.0 780.5 L1051.0 760.1 L1060.4 760.1 L1060.4 780.5 L1082.0 780.5 L1082.0 760.3 L1095.5 760.3 L1095.5 780.5 L1143.7 780.5 L1143.7 757.5 L1148.5 757.5 L1148.5 780.5 L1152.5 780.5 L1152.5 757.5 L1179.3 757.5 L1179.3 780.5 L1236.5 780.5 L1236.5 748.3 L1249.5 748.3 L1249.5 780.5 L1297.9 780.5 L1297.9 748.3 L1311.3 748.3 L1311.3 780.5 L1328.5 780.5 L1328.5 747.3 L1333.3 747.3 L1333.3 780.5 L1386.3 780.5 L1386.3 749.8 L1395.3 749.8 L1395.3 780.5 L1544.6 780.5 L1544.6 734.5 L1549.4 734.5 L1549.4 780.5 L1553.4 780.5 L1553.4 734.5 L1575.8 734.5 L1575.8 780.5 L1624 780.5 L1624 721.8 L1628 721.8" fill="none" stroke="#7d6d3a" stroke-width="1.1"/>
<line x1="27" x2="1624" y1="780.5" y2="780.5" stroke="#cdc6b0" stroke-width="1"/>
<text x="1631" y="779" text-anchor="end" class="ax">0</text>
<line x1="29.5" x2="29.5" y1="781" y2="790" stroke="#ccd6eb" stroke-width="1"/>
<text x="30" y="797.8" class="xl" textLength="27.9" lengthAdjust="spacingAndGlyphs">26. …</text>
<line x1="90.5" x2="90.5" y1="781" y2="790" stroke="#ccd6eb" stroke-width="1"/>
<text x="90.3" y="797.8" text-anchor="middle" class="xl" textLength="30.8" lengthAdjust="spacingAndGlyphs">9. 九月</text>
<line x1="152.5" x2="152.5" y1="781" y2="790" stroke="#ccd6eb" stroke-width="1"/>
<text x="152.0" y="797.8" text-anchor="middle" class="xl" textLength="36.7" lengthAdjust="spacingAndGlyphs">23. 九月</text>
<line x1="214.5" x2="214.5" y1="781" y2="790" stroke="#ccd6eb" stroke-width="1"/>
<text x="213.7" y="797.8" text-anchor="middle" class="xl" textLength="30.8" lengthAdjust="spacingAndGlyphs">7. 十月</text>
<line x1="275.5" x2="275.5" y1="781" y2="790" stroke="#ccd6eb" stroke-width="1"/>
<text x="275.4" y="797.8" text-anchor="middle" class="xl" textLength="36.7" lengthAdjust="spacingAndGlyphs">21. 十月</text>
<line x1="337.5" x2="337.5" y1="781" y2="790" stroke="#ccd6eb" stroke-width="1"/>
<text x="337.1" y="797.8" text-anchor="middle" class="xl" textLength="40.6" lengthAdjust="spacingAndGlyphs">4. 十一月</text>
<line x1="399.5" x2="399.5" y1="781" y2="790" stroke="#ccd6eb" stroke-width="1"/>
<text x="398.7" y="797.8" text-anchor="middle" class="xl" textLength="46.6" lengthAdjust="spacingAndGlyphs">18. 十一月</text>
<line x1="460.5" x2="460.5" y1="781" y2="790" stroke="#ccd6eb" stroke-width="1"/>
<text x="460.4" y="797.8" text-anchor="middle" class="xl" textLength="40.6" lengthAdjust="spacingAndGlyphs">2. 十二月</text>
<line x1="522.5" x2="522.5" y1="781" y2="790" stroke="#ccd6eb" stroke-width="1"/>
<text x="522.1" y="797.8" text-anchor="middle" class="xl" textLength="46.6" lengthAdjust="spacingAndGlyphs">16. 十二月</text>
<line x1="584.5" x2="584.5" y1="781" y2="790" stroke="#ccd6eb" stroke-width="1"/>
<text x="583.8" y="797.8" text-anchor="middle" class="xl" textLength="46.6" lengthAdjust="spacingAndGlyphs">30. 十二月</text>
<line x1="646.5" x2="646.5" y1="781" y2="790" stroke="#ccd6eb" stroke-width="1"/>
<text x="645.5" y="797.8" text-anchor="middle" class="xl" textLength="36.7" lengthAdjust="spacingAndGlyphs">13. 一月</text>
<line x1="707.5" x2="707.5" y1="781" y2="790" stroke="#ccd6eb" stroke-width="1"/>
<text x="707.2" y="797.8" text-anchor="middle" class="xl" textLength="36.7" lengthAdjust="spacingAndGlyphs">27. 一月</text>
<line x1="769.5" x2="769.5" y1="781" y2="790" stroke="#ccd6eb" stroke-width="1"/>
<text x="768.9" y="797.8" text-anchor="middle" class="xl" textLength="36.7" lengthAdjust="spacingAndGlyphs">10. 二月</text>
<line x1="831.5" x2="831.5" y1="781" y2="790" stroke="#ccd6eb" stroke-width="1"/>
<text x="830.6" y="797.8" text-anchor="middle" class="xl" textLength="36.7" lengthAdjust="spacingAndGlyphs">24. 二月</text>
<line x1="892.5" x2="892.5" y1="781" y2="790" stroke="#ccd6eb" stroke-width="1"/>
<text x="892.3" y="797.8" text-anchor="middle" class="xl" textLength="36.7" lengthAdjust="spacingAndGlyphs">10. 三月</text>
<line x1="954.5" x2="954.5" y1="781" y2="790" stroke="#ccd6eb" stroke-width="1"/>
<text x="953.9" y="797.8" text-anchor="middle" class="xl" textLength="36.7" lengthAdjust="spacingAndGlyphs">24. 三月</text>
<line x1="1016.5" x2="1016.5" y1="781" y2="790" stroke="#ccd6eb" stroke-width="1"/>
<text x="1015.6" y="797.8" text-anchor="middle" class="xl" textLength="30.8" lengthAdjust="spacingAndGlyphs">7. 四月</text>
<line x1="1077.5" x2="1077.5" y1="781" y2="790" stroke="#ccd6eb" stroke-width="1"/>
<text x="1077.3" y="797.8" text-anchor="middle" class="xl" textLength="36.7" lengthAdjust="spacingAndGlyphs">21. 四月</text>
<line x1="1139.5" x2="1139.5" y1="781" y2="790" stroke="#ccd6eb" stroke-width="1"/>
<text x="1139.0" y="797.8" text-anchor="middle" class="xl" textLength="30.8" lengthAdjust="spacingAndGlyphs">5. 五月</text>
<line x1="1201.5" x2="1201.5" y1="781" y2="790" stroke="#ccd6eb" stroke-width="1"/>
<text x="1200.7" y="797.8" text-anchor="middle" class="xl" textLength="36.7" lengthAdjust="spacingAndGlyphs">19. 五月</text>
<line x1="1262.5" x2="1262.5" y1="781" y2="790" stroke="#ccd6eb" stroke-width="1"/>
<text x="1262.4" y="797.8" text-anchor="middle" class="xl" textLength="30.8" lengthAdjust="spacingAndGlyphs">2. 六月</text>
<line x1="1324.5" x2="1324.5" y1="781" y2="790" stroke="#ccd6eb" stroke-width="1"/>
<text x="1324.1" y="797.8" text-anchor="middle" class="xl" textLength="36.7" lengthAdjust="spacingAndGlyphs">16. 六月</text>
<line x1="1386.5" x2="1386.5" y1="781" y2="790" stroke="#ccd6eb" stroke-width="1"/>
<text x="1385.8" y="797.8" text-anchor="middle" class="xl" textLength="36.7" lengthAdjust="spacingAndGlyphs">30. 六月</text>
<line x1="1447.5" x2="1447.5" y1="781" y2="790" stroke="#ccd6eb" stroke-width="1"/>
<text x="1447.5" y="797.8" text-anchor="middle" class="xl" textLength="36.7" lengthAdjust="spacingAndGlyphs">14. 七月</text>
<line x1="1509.5" x2="1509.5" y1="781" y2="790" stroke="#ccd6eb" stroke-width="1"/>
<text x="1509.2" y="797.8" text-anchor="middle" class="xl" textLength="36.7" lengthAdjust="spacingAndGlyphs">28. 七月</text>
<line x1="1571.5" x2="1571.5" y1="781" y2="790" stroke="#ccd6eb" stroke-width="1"/>
<text x="1570.8" y="797.8" text-anchor="middle" class="xl" textLength="36.7" lengthAdjust="spacingAndGlyphs">11. 八月</text>
<text x="1639.5" y="498.9" transform="rotate(90 1639.5 498.9)" text-anchor="middle" class="at" style="font-size:11.5px" textLength="17.7" lengthAdjust="spacingAndGlyphs">PnL</text>
<text x="1639.5" y="608.5" transform="rotate(90 1639.5 608.5)" text-anchor="middle" class="at" style="font-size:11.5px" textLength="54" lengthAdjust="spacingAndGlyphs">Period P&amp;L</text>
<text x="1636" y="678.4" transform="rotate(90 1636 678.4)" text-anchor="middle" class="at" style="font-size:11px" textLength="62.7" lengthAdjust="spacingAndGlyphs">vol/position</text>
<text x="1636" y="749.2" transform="rotate(90 1636 749.2)" text-anchor="middle" class="at" style="font-size:11px" textLength="51.8" lengthAdjust="spacingAndGlyphs">utilization</text>
<text x="495.8" y="815" class="lgt" textLength="19.1" lengthAdjust="spacingAndGlyphs">PnL</text>
<text x="552.3" y="815" class="lgt" textLength="99.0" lengthAdjust="spacingAndGlyphs">Benchmark return</text>
<text x="689" y="815" class="lgt" textLength="59.2" lengthAdjust="spacingAndGlyphs">Period P&amp;L</text>
<text x="786.1" y="815" class="lgt" textLength="52.1" lengthAdjust="spacingAndGlyphs">Trade Vol</text>
<text x="876.4" y="815" class="lgt" textLength="72.0" lengthAdjust="spacingAndGlyphs">Position long</text>
<text x="986.4" y="815" class="lgt" textLength="76.8" lengthAdjust="spacingAndGlyphs">Position short</text>
<text x="1101.1" y="815" class="lgt" textLength="90.5" lengthAdjust="spacingAndGlyphs">Asset utilization</text>
</svg>

<!-- legend -->
<svg class="abs" style="left:0;top:800px" width="1672" height="22">
 <circle cx="483.4" cy="10.8" r="5.4" fill="#3e6aa5"/>
 <line x1="533" x2="547" y1="11.5" y2="11.5" stroke="#c96a68" stroke-width="1.2"/>
 <circle cx="676.7" cy="10.8" r="5.4" fill="#434348"/>
 <circle cx="773.6" cy="10.8" r="5.4" fill="#90ed7d"/>
 <circle cx="864.3" cy="10.8" r="5.4" fill="#f7a35c"/>
 <circle cx="974.1" cy="10.8" r="5.4" fill="#8085e9"/>
 <line x1="1082" x2="1096" y1="11.5" y2="11.5" stroke="#8c7d4a" stroke-width="1.2"/>
</svg>

<!-- navigator -->
<div class="abs" style="left:26px;top:822px;width:1605px;height:19px;background:#c6d3e3;border-top:1px solid #b9c2cc"></div>
<div class="abs" style="left:52.3px;top:823px;width:1px;height:18px;background:#b8c5d6"></div>
<div class="nl" style="left:57.3px">九月 '24</div>
<div class="abs" style="left:186px;top:823px;width:1px;height:18px;background:#b8c5d6"></div>
<div class="nl" style="left:191px">十月 '24</div>
<div class="abs" style="left:322.9px;top:823px;width:1px;height:18px;background:#b8c5d6"></div>
<div class="nl" style="left:327.9px">十一月 '24</div>
<div class="abs" style="left:457px;top:823px;width:1px;height:18px;background:#b8c5d6"></div>
<div class="nl" style="left:462px">十二月 '24</div>
<div class="abs" style="left:591.7px;top:823px;width:1px;height:18px;background:#b8c5d6"></div>
<div class="nl" style="left:596.7px">一月 '25</div>
<div class="abs" style="left:729.5px;top:823px;width:1px;height:18px;background:#b8c5d6"></div>
<div class="nl" style="left:734.5px">二月 '25</div>
<div class="abs" style="left:852.5px;top:823px;width:1px;height:18px;background:#b8c5d6"></div>
<div class="nl" style="left:857.5px">三月 '25</div>
<div class="abs" style="left:989.3px;top:823px;width:1px;height:18px;background:#b8c5d6"></div>
<div class="nl" style="left:994.3px">四月 '25</div>
<div class="abs" style="left:1122.3px;top:823px;width:1px;height:18px;background:#b8c5d6"></div>
<div class="nl" style="left:1127.3px">五月 '25</div>
<div class="abs" style="left:1259px;top:823px;width:1px;height:18px;background:#b8c5d6"></div>
<div class="nl" style="left:1264px">六月 '25</div>
<div class="abs" style="left:1391px;top:823px;width:1px;height:18px;background:#b8c5d6"></div>
<div class="nl" style="left:1396px">七月 '25</div>
<div class="abs" style="left:1528px;top:823px;width:1px;height:18px;background:#b8c5d6"></div>
<div class="nl" style="left:1533px">八月 '25</div>

<div class="abs" style="left:22.5px;top:824.5px;width:8px;height:14px;background:#f2f2f2;border:1px solid #999;border-radius:2px"></div>
<div class="abs" style="left:25px;top:828px;width:1px;height:7px;background:#777"></div>
<div class="abs" style="left:27px;top:828px;width:1px;height:7px;background:#777"></div>
<div class="abs" style="left:1626px;top:824.5px;width:8px;height:14px;background:#f2f2f2;border:1px solid #999;border-radius:2px"></div>
<div class="abs" style="left:1628.5px;top:828px;width:1px;height:7px;background:#777"></div>
<div class="abs" style="left:1630.5px;top:828px;width:1px;height:7px;background:#777"></div>

<!-- back to top -->
<div class="abs" style="left:1639px;top:785px;width:35px;height:35px;border-radius:50%;background:#fff;box-shadow:0 0 8px rgba(0,0,0,0.08)"></div>
<svg class="abs" style="left:1648px;top:793px" width="17" height="17"><path d="M3 3.6 H15.5" stroke="#333" stroke-width="1.4"/><path d="M9.2 15 V7.5 M6.9 9.8 L9.2 7.2 L11.5 9.8" stroke="#333" stroke-width="1.4" fill="none"/></svg>

</body></html>
